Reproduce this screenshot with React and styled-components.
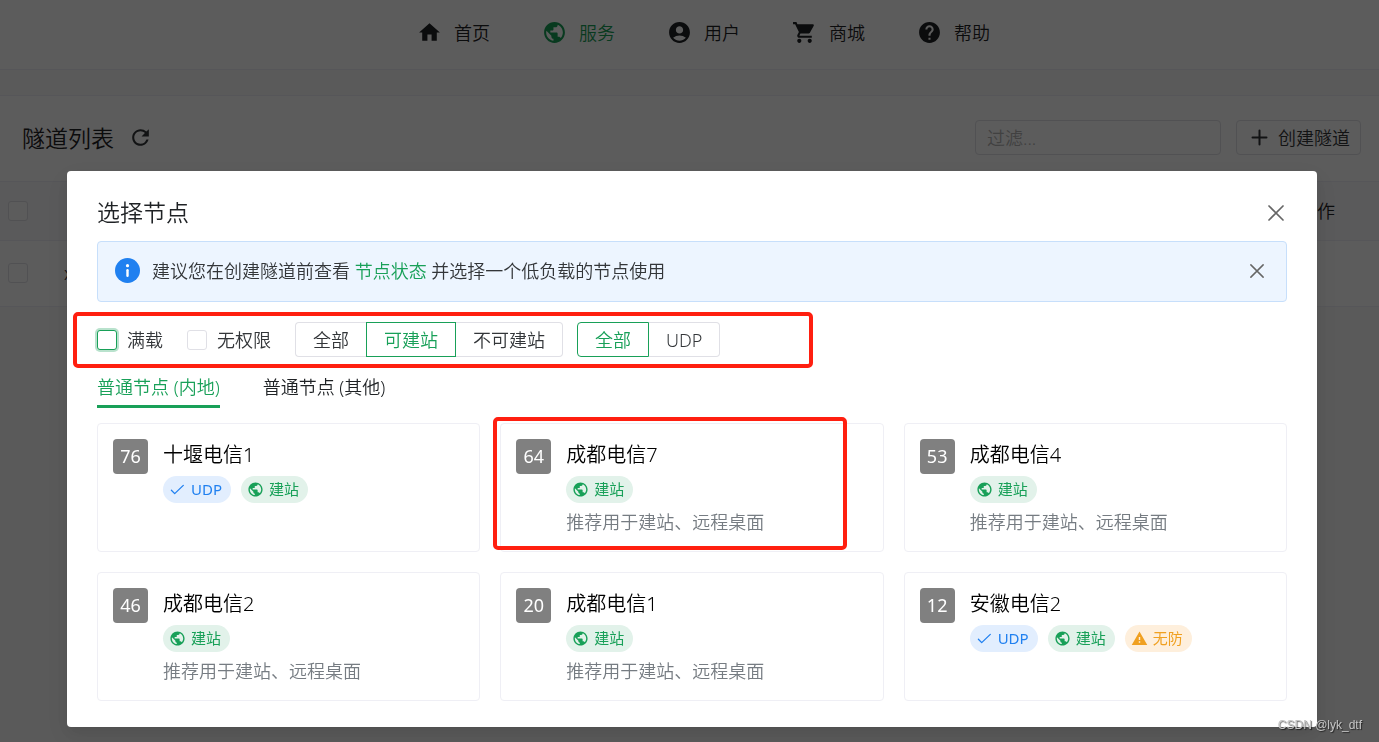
import React from "react";
import styled, { createGlobalStyle, css } from "styled-components";
import {
  MdHome,
  MdPublic,
  MdAccountCircle,
  MdShoppingCart,
  MdHelp,
  MdRefresh,
  MdWarning,
} from "react-icons/md";

const GREEN = "#18a058";
const BLUE = "#2080f0";

const GlobalStyle = createGlobalStyle`
  *, *::before, *::after { box-sizing: border-box; }
  body {
    margin: 0;
    background: #fafafa;
    color: #333639;
    font-family: "Noto Sans", "Noto Sans CJK SC", sans-serif;
    font-weight: 350;
    font-size: 18px;
    line-height: 28px;
  }
  button, input { font: inherit; color: inherit; }
  button { background: none; border: 0; padding: 0; cursor: pointer; }
  h1, h2, h3, p { margin: 0; font-weight: 350; }
  svg { display: block; flex: none; }
`;

/* ---------- page ---------- */

const Header = styled.header`
  background: #fff;
  border-bottom: 1px solid #efeff5;
`;

const Nav = styled.nav`
  display: flex;
  justify-content: center;
  align-items: center;
  gap: 52px;
  height: 69px;
  padding: 0 0 4px 28px;
`;

const NavLink = styled.a`
  display: flex;
  align-items: center;
  gap: 12px;
  color: ${(p) => (p.$active ? GREEN : "#1f2225")};
  text-decoration: none;
`;

const Panel = styled.main`
  margin-top: 25px;
  background: #fff;
  border-top: 1px solid #efeff5;
`;

const PanelHead = styled.div`
  display: flex;
  align-items: center;
  justify-content: space-between;
  height: 85px;
  padding: 0 18px 2px 22px;
`;

const PanelTitle = styled.div`
  display: flex;
  align-items: center;
  gap: 14px;
  h1 { font-size: 23px; color: #1f2225; }
`;

const Tools = styled.div`
  display: flex;
  gap: 15px;
`;

const FilterInput = styled.input`
  width: 246px;
  height: 35px;
  padding: 0 11px;
  border: 1px solid #e0e0e6;
  border-radius: 4px;
  background: #fff;
  &::placeholder { color: #b4b4b4; opacity: 1; }
`;

const CreateButton = styled.button`
  display: flex;
  align-items: center;
  gap: 8px;
  height: 35px;
  padding: 0 10px 0 12px;
  border: 1px solid #e0e0e6;
  border-radius: 4px;
`;

const Table = styled.table`
  width: 100%;
  border-collapse: separate;
  border-spacing: 0;
  border-top: 1px solid #efeff5;
  th, td {
    padding: 0 8px;
    border-bottom: 1px solid #efeff5;
    text-align: left;
    font-weight: 350;
    color: #1f2225;
  }
  th { height: 59px; background: #fafafc; }
  td { height: 66px; padding-bottom: 2px; }
  th:first-child, td:first-child { width: 56px; }
  th:last-child, td:last-child { width: 88px; }
`;

const Checkbox = styled.input.attrs({ type: "checkbox" })`
  appearance: none;
  display: block;
  width: 20px;
  height: 20px;
  margin: 0;
  border: 1px solid #e0e0e6;
  border-radius: 3px;
  background: #fff;
  ${(p) =>
    p.$focused &&
    css`
      border-color: ${GREEN};
      box-shadow: 0 0 0 2px rgba(24, 160, 88, 0.3);
    `}
`;

/* ---------- modal ---------- */

const Mask = styled.div`
  position: fixed;
  inset: 0;
  display: flex;
  align-items: flex-start;
  padding: 171px 62px 0 67px;
  background: rgba(0, 0, 0, 0.64);
`;

const Dialog = styled.section`
  flex: 1;
  min-width: 0;
  padding: 24px 30px 26px;
  background: #fff;
  border-radius: 4px;
  box-shadow: 0 3px 6px -4px rgba(0, 0, 0, 0.12),
    0 6px 16px 0 rgba(0, 0, 0, 0.08), 0 9px 28px 8px rgba(0, 0, 0, 0.05);
`;

const DialogHead = styled.div`
  display: flex;
  align-items: center;
  justify-content: space-between;
  height: 36px;
  margin-bottom: 10px;
  h2 { font-size: 23px; line-height: 26px; padding-bottom: 2px; color: #1f2225; }
`;

const CloseButton = styled.button`
  display: grid;
  place-items: center;
  width: 22px;
  height: 22px;
  color: #666;
`;

const Alert = styled.div`
  display: flex;
  align-items: center;
  height: 61px;
  padding: 0 18px 2px 17px;
  border: 1px solid #c7dffb;
  border-radius: 4px;
  background: #edf5ff;
  p { flex: 1; margin-left: 12px; }
  a { color: ${GREEN}; text-decoration: none; }
`;

const Filters = styled.div`
  position: relative;
  display: flex;
  align-items: center;
  gap: 14px;
  margin-top: 20px;
  height: 35px;
`;

const CheckLabel = styled.label`
  display: flex;
  align-items: center;
  gap: 10px;
  margin-right: 10px;
`;

const Segments = styled.div`
  display: flex;
`;

const Segment = styled.button`
  height: 35px;
  padding: 0 17px;
  border: 1px solid #e0e0e6;
  border-left-width: ${(p) => (p.$first || p.$active ? 1 : 0)}px;
  border-right-width: ${(p) => (p.$last || p.$active ? 1 : 0)}px;
  border-radius: ${(p) => (p.$first ? "4px 0 0 4px" : p.$last ? "0 4px 4px 0" : "0")};
  ${(p) =>
    p.$active &&
    css`
      border-color: ${GREEN};
      color: ${GREEN};
    `}
`;

const Tabs = styled.div`
  display: flex;
  gap: 43px;
  margin-top: 16px;
`;

const Tab = styled.button`
  height: 35px;
  padding-bottom: 4px;
  border-bottom: 3px solid ${(p) => (p.$active ? GREEN : "transparent")};
  color: ${(p) => (p.$active ? GREEN : "#1f2225")};
`;

const Grid = styled.div`
  display: grid;
  grid-template-columns: repeat(3, 1fr);
  gap: 20px;
  margin-top: 15px;
`;

const Card = styled.article`
  position: relative;
  display: flex;
  gap: 15px;
  min-height: 129px;
  padding: 15px;
  border: 1px solid #efeff5;
  border-radius: 4px;
`;

const Load = styled.span`
  display: grid;
  place-items: center;
  flex: none;
  width: 35px;
  height: 35px;
  padding-bottom: 2px;
  border-radius: 4px;
  background: #808080;
  color: #fff;
  font-weight: 400;
`;

const NodeInfo = styled.div`
  h3 {
    font-size: 20px;
    line-height: 32px;
    color: #000;
  }
  p {
    margin-top: 5px;
    color: #767c82;
  }
`;

const Tags = styled.div`
  display: flex;
  gap: 10px;
  margin-top: 5px;
`;

const tones = {
  info: [BLUE, "#e2eefe"],
  success: [GREEN, "#e2f2ea"],
  warning: ["#f0a020", "#feefdc"],
};

const Tag = styled.span`
  display: flex;
  align-items: center;
  gap: 5px;
  height: 27px;
  padding: 0 9px 0 6px;
  border-radius: 14px;
  font-size: 15px;
  line-height: 24px;
  font-weight: 400;
  color: ${(p) => tones[p.$tone][0]};
  background: ${(p) => tones[p.$tone][1]};
`;

const TagText = styled.span`
  padding-bottom: 2px;
`;

const Marker = styled.span`
  position: absolute;
  z-index: 1;
  border: 4px solid #ff1f10;
  border-radius: 5px;
  pointer-events: none;
`;

const FilterMarker = styled(Marker)`
  left: -24px;
  top: -10px;
  width: 740px;
  height: 56px;
`;

const CardMarker = styled(Marker)`
  left: -8px;
  top: -7px;
  width: 354px;
  height: 133px;
`;

const Watermark = styled.span`
  position: fixed;
  right: 17px;
  bottom: 9px;
  font: 12px/16px "Liberation Sans", sans-serif;
  color: #c4c4c4;
  text-shadow: 1px 1px 1px rgba(0, 0, 0, 0.6);
`;

/* ---------- icons ---------- */

const Cross = ({ size }) => (
  <svg width={size} height={size} viewBox="0 0 16 16" fill="none" stroke="currentColor" strokeWidth="1.7" strokeLinecap="round">
    <path d="M1 1l14 14M15 1L1 15" />
  </svg>
);

const Plus = () => (
  <svg width="21" height="21" viewBox="0 0 21 21" fill="none" stroke="currentColor" strokeWidth="2" strokeLinecap="round">
    <path d="M10.500 3.500v14M3.500 10.500h14" />
  </svg>
);

const Info = () => (
  <svg width="25" height="25" viewBox="0 0 25 25">
    <circle cx="12.500" cy="12.500" r="12.500" fill={BLUE} />
    <circle cx="12.500" cy="7.700" r="1.600" fill="#fff" />
    <rect x="11.300" y="11" width="2.400" height="8" rx="1.200" fill="#fff" />
  </svg>
);

const Check = () => (
  <svg width="17" height="17" viewBox="0 0 17 17" fill="none" stroke="currentColor" strokeWidth="1.300" strokeLinecap="round" strokeLinejoin="round">
    <path d="M2.400 9.200l3.300 3.400L14.300 4.400" />
  </svg>
);

/* ---------- data ---------- */

const nav = [
  { label: "首页", Icon: MdHome },
  { label: "服务", Icon: MdPublic, active: true },
  { label: "用户", Icon: MdAccountCircle },
  { label: "商城", Icon: MdShoppingCart },
  { label: "帮助", Icon: MdHelp },
];

const tagKinds = {
  udp: { tone: "info", label: "UDP", icon: <Check /> },
  site: { tone: "success", label: "建站", icon: <MdPublic size={17} /> },
  open: { tone: "warning", label: "无防", icon: <MdWarning size={17} /> },
};

const ADVICE = "推荐用于建站、远程桌面";

const nodes = [
  { load: 76, name: "十堰电信1", tags: ["udp", "site"] },
  { load: 64, name: "成都电信7", tags: ["site"], note: ADVICE, marked: true },
  { load: 53, name: "成都电信4", tags: ["site"], note: ADVICE },
  { load: 46, name: "成都电信2", tags: ["site"], note: ADVICE },
  { load: 20, name: "成都电信1", tags: ["site"], note: ADVICE },
  { load: 12, name: "安徽电信2", tags: ["udp", "site", "open"] },
];

const SegmentGroup = ({ options, value }) => (
  <Segments role="group">
    {options.map((o, i) => (
      <Segment
        key={o}
        type="button"
        $first={i === 0}
        $last={i === options.length - 1}
        $active={o === value}
        aria-pressed={o === value}
      >
        {o}
      </Segment>
    ))}
  </Segments>
);

export default function App() {
  return (
    <>
      <GlobalStyle />
      <Header>
        <Nav>
          {nav.map(({ label, Icon, active }) => (
            <NavLink key={label} href="#" $active={active}>
              <Icon size={25} />
              {label}
            </NavLink>
          ))}
        </Nav>
      </Header>
      <Panel>
        <PanelHead>
          <PanelTitle>
            <h1>隧道列表</h1>
            <button type="button" aria-label="刷新">
              <MdRefresh size={25} />
            </button>
          </PanelTitle>
          <Tools>
            <FilterInput placeholder="过滤..." aria-label="过滤" />
            <CreateButton type="button">
              <Plus />
              创建隧道
            </CreateButton>
          </Tools>
        </PanelHead>
        <Table>
          <thead>
            <tr>
              <th><Checkbox aria-label="全选" /></th>
              <th />
              <th>操作</th>
            </tr>
          </thead>
          <tbody>
            <tr>
              <td><Checkbox aria-label="选择" /></td>
              <td>x</td>
              <td />
            </tr>
          </tbody>
        </Table>
      </Panel>

      <Mask>
        <Dialog role="dialog" aria-modal="true" aria-labelledby="dialog-title">
          <DialogHead>
            <h2 id="dialog-title">选择节点</h2>
            <CloseButton type="button" aria-label="关闭">
              <Cross size={16} />
            </CloseButton>
          </DialogHead>
          <Alert>
            <Info />
            <p>
              建议您在创建隧道前查看 <a href="#">节点状态</a> 并选择一个低负载的节点使用
            </p>
            <CloseButton type="button" aria-label="关闭提示">
              <Cross size={14} />
            </CloseButton>
          </Alert>
          <Filters>
            <CheckLabel>
              <Checkbox $focused />
              满载
            </CheckLabel>
            <CheckLabel>
              <Checkbox />
              无权限
            </CheckLabel>
            <SegmentGroup options={["全部", "可建站", "不可建站"]} value="可建站" />
            <SegmentGroup options={["全部", "UDP"]} value="全部" />
            <FilterMarker />
          </Filters>
          <Tabs role="tablist">
            <Tab type="button" role="tab" aria-selected="true" $active>普通节点 (内地)</Tab>
            <Tab type="button" role="tab" aria-selected="false">普通节点 (其他)</Tab>
          </Tabs>
          <Grid>
            {nodes.map((n) => (
              <Card key={n.name}>
                <Load>{n.load}</Load>
                <NodeInfo>
                  <h3>{n.name}</h3>
                  <Tags>
                    {n.tags.map((t) => (
                      <Tag key={t} $tone={tagKinds[t].tone}>
                        {tagKinds[t].icon}
                        <TagText>{tagKinds[t].label}</TagText>
                      </Tag>
                    ))}
                  </Tags>
                  {n.note && <p>{n.note}</p>}
                </NodeInfo>
                {n.marked && <CardMarker />}
              </Card>
            ))}
          </Grid>
        </Dialog>
      </Mask>
      <Watermark>CSDN @lyk_dtf</Watermark>
    </>
  );
}
